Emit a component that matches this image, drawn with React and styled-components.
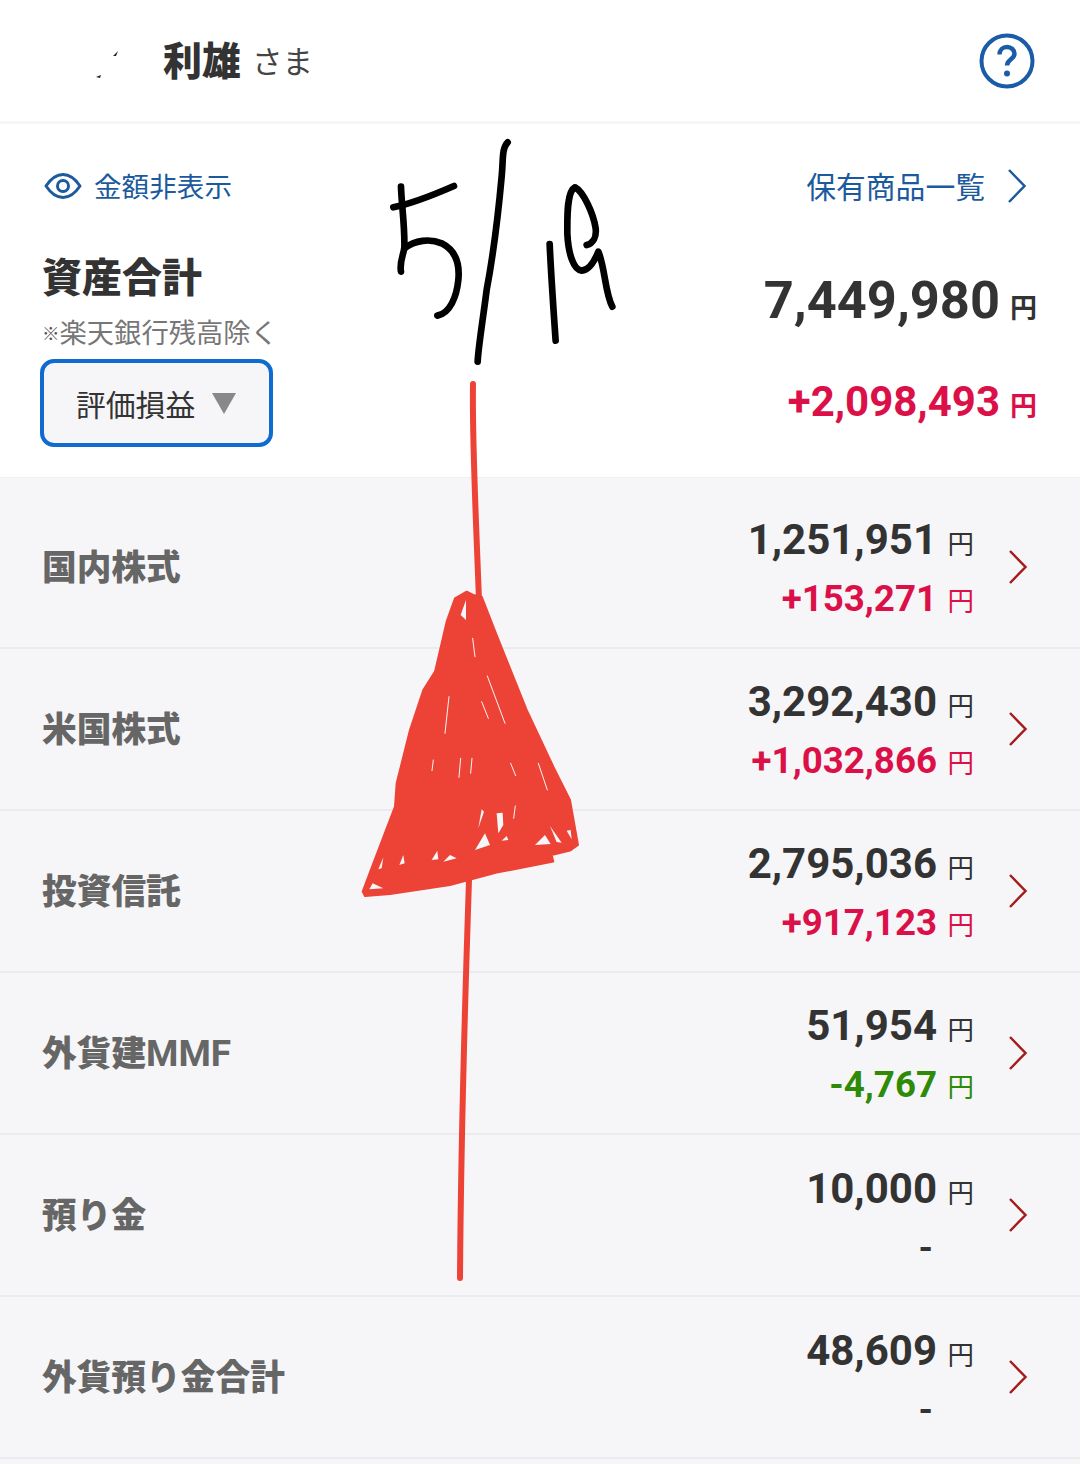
import React from "react";
import styled, { createGlobalStyle } from "styled-components";

const rows = [
  { name: "国内株式", value: "1,251,951", change: "+153,271", tone: "up" },
  { name: "米国株式", value: "3,292,430", change: "+1,032,866", tone: "up" },
  { name: "投資信託", value: "2,795,036", change: "+917,123", tone: "up" },
  { name: "外貨建", latin: "MMF", value: "51,954", change: "-4,767", tone: "down" },
  { name: "預り金", value: "10,000", change: "-", tone: "none" },
  { name: "外貨預り金合計", value: "48,609", change: "-", tone: "none" },
];

const toneColors = { up: "#dc1048", down: "#2f8a08", none: "#333333" };

const App = () => (
  <Page>
    <GlobalStyle />
    <Header>
      <UserName>
        利雄<Honorific>さま</Honorific>
      </UserName>
      <HelpIcon />
    </Header>
    <Summary>
      <LinkRow>
        <TextLink>
          <EyeIcon />
          <HideLabel>金額非表示</HideLabel>
        </TextLink>
        <TextLink>
          <ListLabel>保有商品一覧</ListLabel>
          <Chevron color="#1c5a9e" />
        </TextLink>
      </LinkRow>
      <Totals>
        <div>
          <Title>資産合計</Title>
          <Note>
            <NoteMark>※</NoteMark>楽天銀行残高除く
          </Note>
          <Select>
            評価損益
            <SelectArrow />
          </Select>
        </div>
        <TotalValues>
          <TotalAmount>
            7,449,980<TotalUnit>円</TotalUnit>
          </TotalAmount>
          <TotalGain>
            +2,098,493<TotalUnit>円</TotalUnit>
          </TotalGain>
        </TotalValues>
      </Totals>
    </Summary>
    <List>
      {rows.map((row) => (
        <Row key={row.name}>
          <RowName>
            {row.name}
            {row.latin && <RowNameLatin>{row.latin}</RowNameLatin>}
          </RowName>
          <RowRight>
            <Values>
              <Amount>
                {row.value}
                <Unit>円</Unit>
              </Amount>
              <Change tone={row.tone}>
                {row.change}
                {row.tone !== "none" && <Unit>円</Unit>}
                {row.tone === "none" && <DashGap />}
              </Change>
            </Values>
            <Chevron color="#a61c1c" />
          </RowRight>
        </Row>
      ))}
    </List>
    <Scribbles />
  </Page>
);

export default App;

const HelpIcon = () => (
  <svg width="56" height="56" viewBox="0 0 56 56" fill="none">
    <circle cx="28" cy="28" r="25.5" stroke="#1a5ca8" strokeWidth="4" />
    <path
      d="M20.500 21.500c0-4.500 3.200-7.500 7.500-7.500s7.500 3 7.500 6.800c0 5.500-7.500 5.500-7.500 11.700"
      stroke="#1a5ca8"
      strokeWidth="4.500"
    />
    <circle cx="28" cy="40.500" r="3" fill="#1a5ca8" />
  </svg>
);

const EyeIcon = () => (
  <svg width="38" height="28" viewBox="0 0 38 28" fill="none">
    <path
      d="M2 14C7 6.500 12.500 2.500 19 2.500S31 6.500 36 14c-5 7.500-10.500 11.500-17 11.500S7 21.500 2 14Z"
      stroke="#1c5a9e"
      strokeWidth="3"
      strokeLinejoin="round"
    />
    <circle cx="19" cy="14" r="5.500" stroke="#1c5a9e" strokeWidth="3" />
  </svg>
);

const Chevron = ({ color }) => (
  <svg width="20" height="36" viewBox="0 0 20 36" fill="none">
    <path d="M2 2l15.500 16L2 34" stroke={color} strokeWidth="2.500" />
  </svg>
);

// Hand-drawn marks on top of the screenshot; coordinates in 3x crop space
const Scribbles = () => (
  <Overlay viewBox="0 0 1080 1464" fill="none" strokeLinecap="round" strokeLinejoin="round">
    <path d="M113 56l5-5-2 5ZM96 77l5-2-1 3Z" fill="#222222" />
    <g transform="translate(360 120) scale(0.3333)" stroke="#000000" strokeWidth="20">
      <path d="M100 262C160 250 220 225 282 198" />
      <path d="M123 200C125 260 135 320 133 385C128 410 118 430 123 455" />
      <path d="M133 385C165 360 210 355 245 370C285 390 300 430 295 480C290 530 270 580 232 587" />
      <path d="M443 67C425 85 430 120 425 170C415 280 395 430 380 510C370 590 355 680 353 725" />
      <path d="M569 372C572 440 578 530 582 590L587 662" />
      <path d="M680 375C700 370 710 350 707 325C700 280 670 215 645 202C620 215 622 290 622 340C625 400 640 450 665 452C690 450 705 420 715 395C735 440 735 520 757 560" />
    </g>
    <path d="M473 384C472 440 476 520 479 600" stroke="#ed4336" strokeWidth="6" />
    <path d="M469 880C465 1000 461 1130 460 1278" stroke="#ed4336" strokeWidth="6" />
    <g transform="translate(340 570) scale(0.3333)">
      <path
        d="M345 85L380 65L400 75L425 80L470 195L560 420L640 590L690 690L714 825L690 842L635 855L640 875L470 908L330 945L150 972L75 978L68 965L100 880L165 710L170 640L210 480L250 360L285 305L320 155Z"
        fill="#ed4336"
        stroke="#ed4336"
        strokeWidth="6"
      />
      <g fill="#f6f6f8">
        <path d="M362 135L378 90L378 150Z" />
        <path d="M425 718L432 725L415 775Z" />
        <path d="M470 730L488 728L490 765L475 790Z" />
        <path d="M405 840L435 790L450 825Z" />
        <path d="M585 825L615 795L632 822Z" />
        <path d="M88 958L98 940L130 955Z" />
        <path d="M275 870L292 842L295 868Z" />
        <path d="M310 875L330 855L350 865Z" />
        <path d="M178 885L190 855L194 880Z" />
        <path d="M630 768L665 818L650 816Z" />
        <path d="M680 782L692 780L695 808Z" />
        <path d="M115 898L130 862L125 895Z" />
        <path d="M485 812L500 798L505 810Z" />
      </g>
      <g stroke="#f6f6f8" strokeWidth="3">
        <path d="M442 318L495 460" />
        <path d="M327 380L315 490" />
        <path d="M595 580L622 660" />
        <path d="M398 205L405 260" />
        <path d="M425 395L445 445" />
        <path d="M362 565L357 622" />
        <path d="M396 565L392 610" />
        <path d="M512 580L527 617" />
        <path d="M526 708L521 745" />
        <path d="M280 570L276 602" />
      </g>
    </g>
  </Overlay>
);

const GlobalStyle = createGlobalStyle`
  html, body {
    margin: 0;
    padding: 0;
    background: #f6f6f8;
  }
`;

const Page = styled.div`
  position: relative;
  width: 1080px;
  height: 1464px;
  overflow: hidden;
  font-family: "Noto Sans CJK JP", "Noto Sans", sans-serif;
  color: #333333;
  background: #f6f6f8;
`;

const Overlay = styled.svg`
  position: absolute;
  top: 0;
  left: 0;
  width: 1080px;
  height: 1464px;
  pointer-events: none;
`;

const Header = styled.header`
  display: flex;
  align-items: center;
  justify-content: space-between;
  box-sizing: border-box;
  height: 124px;
  padding: 0 45px 0 163px;
  background: #ffffff;
  border-bottom: 3px solid #f6f6f6;
`;

const UserName = styled.div`
  margin-top: -4px;
  font-size: 39px;
  font-weight: 900;
  line-height: 1;
`;

const Honorific = styled.span`
  position: relative;
  top: -2px;
  margin-left: 11px;
  font-size: 30.500px;
  font-weight: 400;
  color: #444444;
`;

const Summary = styled.section`
  padding: 42px 43px 30px 42px;
  background: #ffffff;
`;

const LinkRow = styled.div`
  display: flex;
  justify-content: space-between;
  height: 40px;
  padding: 0 10px 0 2px;
`;

const TextLink = styled.div`
  display: flex;
  align-items: center;
  color: #1c5a9e;
`;

const HideLabel = styled.span`
  margin: 0 0 3px 12px;
  font-size: 27.600px;
`;

const ListLabel = styled.span`
  margin: 0 22px 3px 0;
  font-size: 29.800px;
`;

const Totals = styled.div`
  display: flex;
  justify-content: space-between;
  margin-top: 46px;
`;

const Title = styled.h1`
  margin: 0;
  font-size: 40px;
  font-weight: 900;
  line-height: 46px;
`;

const Note = styled.div`
  height: 36px;
  margin-top: 15px;
  font-size: 27.300px;
  line-height: 36px;
  color: #777777;
`;

const NoteMark = styled.span`
  font-size: 17.500px;
  font-weight: 900;
  line-height: 1;
  vertical-align: 3px;
  color: #555555;
`;

const Select = styled.div`
  display: flex;
  align-items: center;
  box-sizing: border-box;
  width: 233px;
  height: 88px;
  margin: 10px 0 0 -2px;
  padding-left: 32px;
  font-size: 29.800px;
  color: #333333;
  background: #f6f6f8;
  border: 4px solid #0f6bd0;
  border-radius: 14px;
`;

const SelectArrow = styled.span`
  width: 0;
  height: 0;
  margin: 0 0 0 17px;
  border-left: 12px solid transparent;
  border-right: 12px solid transparent;
  border-top: 21px solid #888888;
`;

const TotalValues = styled.div`
  display: flex;
  flex-direction: column;
  align-items: flex-end;
`;

const TotalAmount = styled.div`
  margin-top: 18px;
  font-family: Roboto, sans-serif;
  font-size: 52.400px;
  font-weight: 700;
  line-height: 60px;
`;

const TotalGain = styled.div`
  margin-top: 40px;
  font-family: Roboto, sans-serif;
  font-size: 42px;
  font-weight: 700;
  line-height: 50px;
  color: #dc1048;
`;

const TotalUnit = styled.span`
  margin-left: 10px;
  font-family: "Noto Sans CJK JP", sans-serif;
  font-size: 27px;
  font-weight: 700;
`;

const List = styled.div`
  padding-top: 9px;
  border-top: 1px solid #efeff1;
`;

const Row = styled.div`
  display: flex;
  align-items: center;
  justify-content: space-between;
  box-sizing: border-box;
  height: 162px;
  padding: 0 52px 0 42px;
  border-bottom: 2px solid #ebebed;
`;

const RowName = styled.div`
  margin-top: -4px;
  font-size: 34.700px;
  font-weight: 900;
  color: #666666;
`;

const RowNameLatin = styled.span`
  font-family: Roboto, sans-serif;
  font-size: 37px;
  font-weight: 700;
`;

const RowRight = styled.div`
  display: flex;
  align-items: center;
  gap: 34px;
`;

const Values = styled.div`
  display: flex;
  flex-direction: column;
  align-items: flex-end;
  gap: 8px;
  padding-top: 6px;
`;

const Amount = styled.div`
  font-family: Roboto, sans-serif;
  font-size: 42px;
  font-weight: 700;
  line-height: 48px;
  color: #333333;
`;

const Change = styled.div`
  font-family: Roboto, sans-serif;
  font-size: 36.700px;
  font-weight: 700;
  line-height: 48px;
  color: ${(props) => toneColors[props.tone]};
`;

const Unit = styled.span`
  margin-left: 10.500px;
  font-family: "Noto Sans CJK JP", sans-serif;
  font-size: 26.500px;
  font-weight: 400;
`;

const DashGap = styled.span`
  display: inline-block;
  width: 41px;
`;
